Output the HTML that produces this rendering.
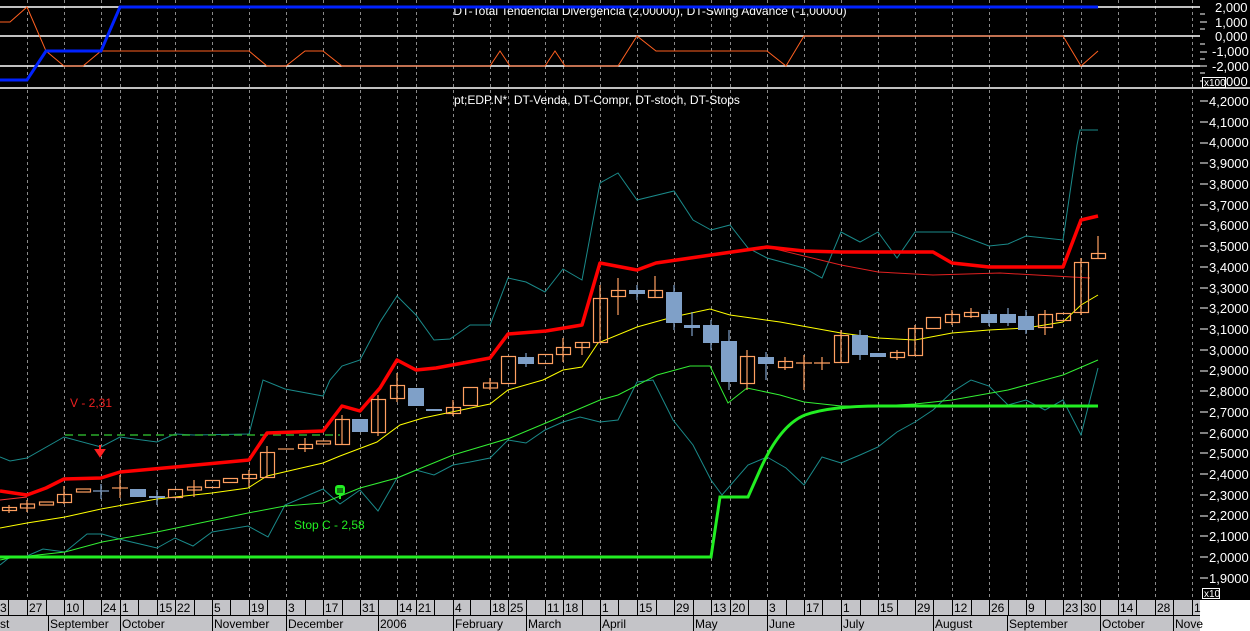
<!DOCTYPE html>
<html><head><meta charset="utf-8"><style>
html,body{margin:0;padding:0;background:#000;width:1250px;height:631px;overflow:hidden}
svg text{font-family:"Liberation Sans",sans-serif}
</style></head><body>
<svg width="1250" height="631" xmlns="http://www.w3.org/2000/svg">
<rect width="1250" height="631" fill="#000"/>
<g stroke="#8a8a8a" stroke-width="1" stroke-dasharray="3,3">
<path d="M27.5 0V600M64.5 0V600M101.5 0V600M120.5 0V600M157.5 0V600M175.5 0V600M212.5 0V600M249.5 0V600M286.5 0V600M323.5 0V600M360.5 0V600M397.5 0V600M416.5 0V600M453.5 0V600M490.5 0V600M508.5 0V600M545.5 0V600M563.5 0V600M600.5 0V600M637.5 0V600M674.5 0V600M711.5 0V600M730.5 0V600M767.5 0V600M804.5 0V600M841.5 0V600M878.5 0V600M915.5 0V600M952.5 0V600M989.5 0V600M1026.5 0V600M1063.5 0V600M1081.5 0V600M1118.5 0V600M1155.5 0V600M1192.5 0V600"/>
</g>
<g stroke="#fff" stroke-width="1.5">
<path d="M0 7H1200M0 36H1200M0 66H1200M0 88H1250"/>
</g>
<text x="650" y="15" fill="#fff" font-size="12" text-anchor="middle">DT-Total Tendencial Divergência (2,00000), DT-Swing Advance (-1,00000)</text>
<polyline fill="none" stroke="#ff6020" stroke-width="1" points="0,22 10,22 27,7 46,51 64,66 83,66 101,51 249,51 267,66 286,66 305,51 323,51 342,66 415,66 490,66 500,51 510,66 545,66 555,51 565,66 600,66 618,66 637,36 656,51 767,51 786,66 804,36 1063,36 1081,66 1098,51"/>
<polyline fill="none" stroke="#0022ff" stroke-width="3" points="0,80 27,80 46,51 101,51 120,7 1098,7"/>
<g fill="#fff" font-size="13">
<text x="1215" y="12">2,000</text><text x="1215" y="27">1,000</text><text x="1215" y="41">0,000</text><text x="1212" y="56">-1,000</text><text x="1212" y="71">-2,000</text><text x="1226" y="86">000</text>
</g>
<g stroke="#fff"><path d="M1200 14h5M1200 22h7M1200 29h5M1200 44h5M1200 52h7M1200 59h5M1200 66h7M1200 73h5M1200 81h5"/></g>
<rect x="1202.5" y="77.5" width="23" height="10" fill="#000" stroke="#fff"/>
<text x="1204" y="86" fill="#fff" font-size="10">x100</text>
<text x="597" y="104" fill="#fff" font-size="12" text-anchor="middle">pt;EDP.N*, DT-Venda, DT-Compr, DT-stoch, DT-Stops</text>
<g fill="#fff" font-size="13">
<text x="1209" y="106">4,2000</text><text x="1209" y="127">4,1000</text><text x="1209" y="147">4,0000</text><text x="1209" y="168">3,9000</text><text x="1209" y="189">3,8000</text><text x="1209" y="210">3,7000</text><text x="1209" y="230">3,6000</text><text x="1209" y="251">3,5000</text><text x="1209" y="272">3,4000</text><text x="1209" y="293">3,3000</text><text x="1209" y="313">3,2000</text><text x="1209" y="334">3,1000</text><text x="1209" y="355">3,0000</text><text x="1209" y="375">2,9000</text><text x="1209" y="396">2,8000</text><text x="1209" y="417">2,7000</text><text x="1209" y="438">2,6000</text><text x="1209" y="458">2,5000</text><text x="1209" y="479">2,4000</text><text x="1209" y="500">2,3000</text><text x="1209" y="520">2,2000</text><text x="1209" y="541">2,1000</text><text x="1209" y="562">2,0000</text><text x="1209" y="583">1,9000</text>
</g>
<g stroke="#fff"><path d="M1200 101h8M1200 122h8M1200 143h8M1200 163h8M1200 184h8M1200 205h8M1200 225h8M1200 246h8M1200 267h8M1200 288h8M1200 308h8M1200 329h8M1200 350h8M1200 371h8M1200 391h8M1200 412h8M1200 433h8M1200 453h8M1200 474h8M1200 495h8M1200 516h8M1200 536h8M1200 557h8M1200 578h8"/></g>
<rect x="1202.5" y="588.5" width="17" height="10" fill="#000" stroke="#fff"/>
<text x="1204" y="597" fill="#fff" font-size="10">x10</text>

<polyline fill="none" stroke="#1a8a8a" stroke-width="1" points="0,457 10,461 27,458 64,437 101,447 120,437 157,442 175,434 194,435 249,434 263,380 285,389 323,396 330,380 342,366 360,360 380,322 397,296 416,315 434,340 450,339 470,325 490,325 508,278 526,282 545,292 563,269 582,280 600,183 618,173 637,200 674,191 693,220 711,230 730,225 748,248 767,258 804,268 822,278 841,232 860,242 878,232 897,258 915,232 952,232 989,246 1008,244 1026,236 1063,240 1077,145 1080,130 1098,130"/>
<polyline fill="none" stroke="#1a8a8a" stroke-width="1" points="0,565 10,557 27,556 43,549 65,552 87,534 102,534 123,540 157,548 175,538 193,546 212,532 248,526 268,537 285,505 323,489 340,504 360,490 378,511 397,478 416,470 434,475 453,465 470,462 490,458 508,440 526,443 545,430 563,422 580,417 600,422 618,420 637,382 653,380 673,420 693,445 711,480 722,495 748,465 767,457 786,468 804,485 822,457 841,463 860,455 878,447 897,432 915,422 933,410 952,392 971,380 989,386 1008,405 1026,400 1045,410 1063,400 1081,435 1098,368"/>
<path d="M65 435H340" stroke="#2aaa2a" stroke-width="1.5" stroke-dasharray="8,5" fill="none"/>
<polyline fill="none" stroke="#ff3030" stroke-width="1" points="0,500 27,497"/>
<polyline fill="none" stroke="#e02020" stroke-width="1" points="767,247 800,255 841,265 878,272 933,275 1000,273 1090,278"/>
<polyline fill="none" stroke="#ff0000" stroke-width="3.5" stroke-linejoin="round" points="0,491 27,495 46,488 64,479 101,478 120,472 175,467 249,460 267,433 323,431 342,406 360,411 380,388 397,360 416,370 436,368 490,358 508,334 546,331 582,325 600,263 637,270 656,263 711,255 767,247 804,251 841,252 933,252 952,263 989,267 1063,267 1081,220 1098,216"/>
<polyline fill="none" stroke="#ffff00" stroke-width="1" points="0,528 27,523 65,517 101,509 157,499 212,493 248,488 267,476 323,463 340,456 377,442 400,425 423,418 490,404 508,390 543,380 563,370 582,367 598,343 637,327 673,317 710,309 730,315 780,322 841,333 878,338 915,340 952,333 989,330 1026,328 1063,322 1081,305 1098,295"/>
<polyline fill="none" stroke="#33ee33" stroke-width="1" points="0,560 10,558 65,552 102,542 157,532 248,513 285,506 323,503 360,488 397,478 453,455 510,438 553,420 600,400 618,395 657,375 690,366 710,366 728,403 747,388 780,395 804,402 841,406 878,406 915,404 952,400 1008,390 1063,375 1098,360"/>
<path d="M0 557H711L720 497H748L760 470Q780 425 805 415Q830 406 880 406H1098" fill="none" stroke="#22ee22" stroke-width="3"/>

<g stroke="#ffa060" stroke-width="1.2" fill="none">
<path d="M9 505V513M27 500V512M64 486V504M120 475V498M194 480V497M249 470V487M267 446V477M305 438V452M342 415V444M378 395V436M397 373V402M453 400V416M490 378V390M563 338V362M582 342V355M600 285V342M618 278V315M655 276V298M747 350V390M785 357V370M804 355V390M822 357V370M841 330V362M897 350V360M915 325V356M952 310V325M971 308V318M1045 310V335M1081 258V315M1098 236V258"/>
<rect x="2.5" y="507.5" width="14" height="3"/>
<rect x="20.5" y="504" width="14" height="4"/>
<rect x="39.5" y="502" width="14" height="3"/>
<rect x="57.5" y="494.5" width="14" height="8"/>
<rect x="76.5" y="489" width="14" height="3"/>
<path d="M112 488h16"/>
<rect x="168.5" y="489.5" width="14" height="8"/>
<rect x="187.5" y="487" width="14" height="3"/>
<rect x="205.5" y="480.5" width="14" height="7"/>
<rect x="223.5" y="478.5" width="14" height="4"/>
<rect x="242.5" y="474.5" width="14" height="4"/>
<rect x="260.5" y="452.5" width="14" height="25"/>
<path d="M278 449h16"/>
<rect x="298.5" y="444.5" width="14" height="4"/>
<rect x="316.5" y="441" width="14" height="3"/>
<rect x="335.5" y="419.5" width="14" height="25"/>
<rect x="371.5" y="399.5" width="14" height="33"/>
<rect x="390.5" y="385.5" width="14" height="13"/>
<rect x="446.5" y="407.5" width="14" height="6"/>
<rect x="463.5" y="387.5" width="14" height="18"/>
<rect x="483.5" y="383" width="14" height="5"/>
<rect x="501.5" y="356.5" width="14" height="27"/>
<rect x="538.5" y="354.5" width="14" height="9"/>
<rect x="556.5" y="347.5" width="14" height="7"/>
<rect x="575.5" y="342.5" width="14" height="5"/>
<rect x="593.5" y="298.5" width="14" height="44"/>
<rect x="611.5" y="290.5" width="14" height="6"/>
<rect x="648.5" y="290.5" width="14" height="7"/>
<rect x="740.5" y="356.5" width="14" height="27"/>
<rect x="778.5" y="361.5" width="14" height="6"/>
<path d="M796 363h16M814 363h16"/>
<rect x="834.5" y="335.5" width="14" height="27"/>
<rect x="890.5" y="352.5" width="14" height="5"/>
<rect x="908.5" y="328.5" width="14" height="27"/>
<rect x="926.5" y="317.5" width="14" height="11"/>
<rect x="945.5" y="314.5" width="14" height="8"/>
<rect x="964.5" y="312.5" width="14" height="4"/>
<rect x="1038.5" y="314.5" width="14" height="13"/>
<rect x="1056.5" y="313.5" width="14" height="7"/>
<rect x="1074.5" y="262.5" width="14" height="50"/>
<rect x="1091.5" y="253.5" width="14" height="5"/>
</g>
<g stroke="#7fa0c8" stroke-width="1.2">
<path d="M101 484V499M93 491h16M157 490V505M526 353V367M637 285V300M674 285V330M692 312V336M711 320V350M729 330V390M766 352V380M860 330V360M989 310V326M1008 308V326M1026 310V334"/>
</g>
<g fill="#7fa0c8">
<rect x="130" y="489" width="16" height="8"/><rect x="149" y="496" width="16" height="2"/>
<rect x="352" y="419" width="16" height="13"/><rect x="408" y="388" width="16" height="18"/>
<rect x="426" y="409" width="16" height="2"/><rect x="518" y="357" width="16" height="7"/>
<rect x="629" y="290" width="16" height="4"/><rect x="666" y="292" width="16" height="31"/>
<rect x="684" y="325" width="16" height="3"/><rect x="703" y="325" width="16" height="18"/>
<rect x="721" y="341" width="16" height="41"/><rect x="758" y="357" width="16" height="7"/>
<rect x="852" y="335" width="16" height="20"/><rect x="870" y="353" width="16" height="4"/>
<rect x="981" y="314" width="16" height="9"/><rect x="1000" y="314" width="16" height="9"/>
<rect x="1018" y="316" width="16" height="14"/>
</g>
<text x="70" y="407" fill="#ee2020" font-size="12">V - 2,31</text>
<path d="M100 445V453M96 450L100 456L104 450Z" stroke="#ff2020" stroke-width="2" fill="#ff2020"/>
<text x="294" y="529" fill="#22ee22" font-size="12">Stop C - 2,58</text>
<g fill="#22ee22"><rect x="335" y="485" width="10" height="10" rx="3"/><rect x="339" y="494" width="2" height="5"/></g>
<g stroke="#000"><path d="M338 488V493M340 488V493M342 488V493"/></g>

<rect x="0" y="600" width="1200" height="31" fill="#c4c4c8"/>
<rect x="1200" y="600" width="50" height="31" fill="#fff"/>
<path d="M0 615.5H1200" stroke="#000"/>
<g stroke="#000"><path d="M27.5 600V615M64.5 600V615M101.5 600V615M120.5 600V615M157.5 600V615M175.5 600V615M212.5 600V615M249.5 600V615M286.5 600V615M323.5 600V615M360.5 600V615M397.5 600V615M416.5 600V615M453.5 600V615M490.5 600V615M508.5 600V615M545.5 600V615M563.5 600V615M600.5 600V615M637.5 600V615M674.5 600V615M711.5 600V615M730.5 600V615M767.5 600V615M804.5 600V615M841.5 600V615M878.5 600V615M915.5 600V615M952.5 600V615M989.5 600V615M1026.5 600V615M1063.5 600V615M1081.5 600V615M1118.5 600V615M1155.5 600V615M1192.5 600V615M8.5 600V615M46.5 600V615M83.5 600V615M138.5 600V615M194.5 600V615M230.5 600V615M267.5 600V615M305.5 600V615M342.5 600V615M378.5 600V615M434.5 600V615M470.5 600V615M526.5 600V615M582.5 600V615M618.5 600V615M656.5 600V615M693.5 600V615M748.5 600V615M786.5 600V615M822.5 600V615M860.5 600V615M897.5 600V615M933.5 600V615M971.5 600V615M1008.5 600V615M1045.5 600V615M1100.5 600V615M1136.5 600V615M1173.5 600V615
M48.5 616V631M120.5 616V631M212.5 616V631M286.5 616V631M378.5 616V631M453.5 616V631M526.5 616V631M600.5 616V631M693.5 616V631M767.5 616V631M841.5 616V631M933.5 616V631M1007.5 616V631M1100.5 616V631M1173.5 616V631"/></g>
<g fill="#000" font-size="12">
<text x="0" y="612">3</text><text x="29" y="612">27</text><text x="66" y="612">10</text><text x="103" y="612">24</text><text x="122" y="612">1</text><text x="159" y="612">15</text><text x="177" y="612">22</text><text x="214" y="612">5</text><text x="251" y="612">19</text><text x="288" y="612">3</text><text x="325" y="612">17</text><text x="362" y="612">31</text><text x="399" y="612">14</text><text x="418" y="612">21</text><text x="455" y="612">4</text><text x="492" y="612">18</text><text x="510" y="612">25</text><text x="547" y="612">11</text><text x="565" y="612">18</text><text x="602" y="612">1</text><text x="639" y="612">15</text><text x="676" y="612">29</text><text x="713" y="612">13</text><text x="732" y="612">20</text><text x="769" y="612">3</text><text x="806" y="612">17</text><text x="843" y="612">1</text><text x="880" y="612">15</text><text x="917" y="612">29</text><text x="954" y="612">12</text><text x="991" y="612">26</text><text x="1028" y="612">9</text><text x="1065" y="612">23</text><text x="1083" y="612">30</text><text x="1120" y="612">14</text><text x="1157" y="612">28</text><text x="1194" y="612">1</text>
<text x="0" y="628">st</text><text x="50" y="628">September</text><text x="122" y="628">October</text><text x="214" y="628">November</text><text x="288" y="628">December</text><text x="380" y="628">2006</text><text x="455" y="628">February</text><text x="528" y="628">March</text><text x="602" y="628">April</text><text x="695" y="628">May</text><text x="769" y="628">June</text><text x="843" y="628">July</text><text x="935" y="628">August</text><text x="1009" y="628">September</text><text x="1102" y="628">October</text><text x="1175" y="628">Nove</text>
</g>
</svg>
</body></html>
